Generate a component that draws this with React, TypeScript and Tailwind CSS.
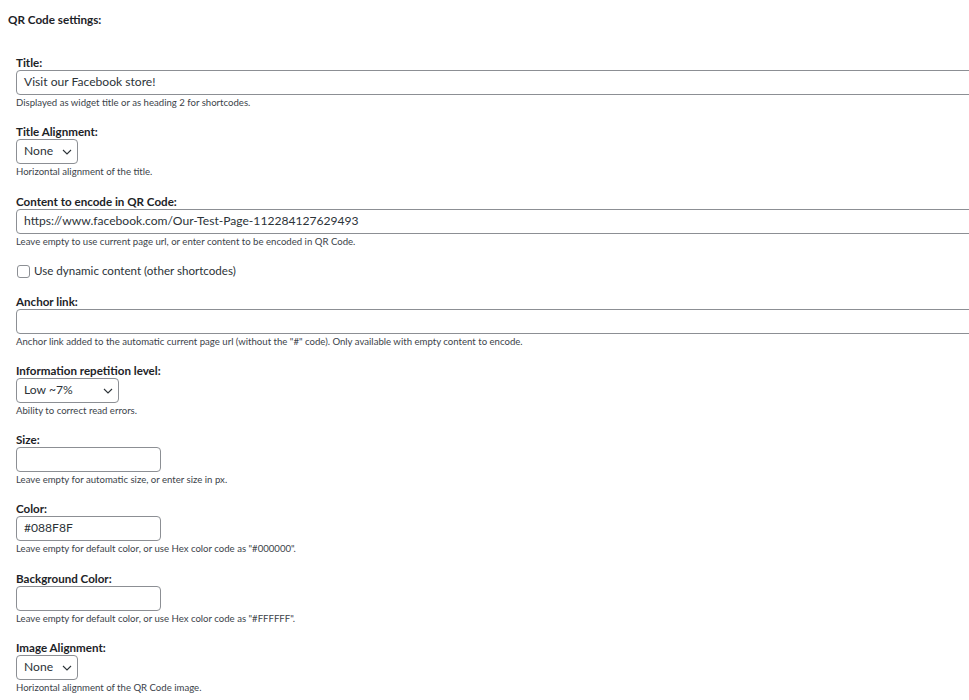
import React from "react";

const font = { fontFamily: 'Lato, "Open Sans", sans-serif' };

function Chevron() {
  return (
    <svg width="10" height="6" viewBox="0 0 10 6" className="shrink-0">
      <path d="M1 1l4 4 4-4" fill="none" stroke="#2c3338" strokeWidth="1.1" />
    </svg>
  );
}

function Label({ children }: { children: React.ReactNode }) {
  return (
    <div className="text-[11.6px] leading-[15px] font-bold text-[#1d2327]">{children}</div>
  );
}

function Help({ children }: { children: React.ReactNode }) {
  return <div className="text-[9.6px] leading-[16px] text-[#3c434a]">{children}</div>;
}

function TextInput({ value, w }: { value?: string; w: string }) {
  return (
    <div
      className={`${w} h-[25px] border border-[#8c8f94] rounded-[4px] bg-white flex items-center px-[7px] text-[12.1px] text-[#2c3338] whitespace-nowrap overflow-hidden`}
    >
      {value}
    </div>
  );
}

function Select({ value, w }: { value: string; w: string }) {
  return (
    <div
      className={`${w} h-[25px] border border-[#8c8f94] rounded-[4px] bg-white flex items-center justify-between pl-[7px] pr-[5px] text-[12.1px] text-[#2c3338]`}
    >
      <span>{value}</span>
      <Chevron />
    </div>
  );
}

function Section({ label, children, help }: { label: string; children: React.ReactNode; help: string }) {
  return (
    <div className="mb-[13px]">
      <Label>{label}</Label>
      {children}
      <Help>{help}</Help>
    </div>
  );
}

export default function App() {
  return (
    <div className="w-[969px] h-[700px] overflow-hidden bg-white" style={font}>
      <div className="pl-[8px] pt-[11px] text-[11.7px] leading-[16px] font-bold text-[#1d2327]">
        QR Code settings:
      </div>
      <div className="pl-[16px] pt-[28px]">
        <Section label="Title:" help="Displayed as widget title or as heading 2 for shortcodes.">
          <TextInput w="w-[970px]" value="Visit our Facebook store!" />
        </Section>
        <Section label="Title Alignment:" help="Horizontal alignment of the title.">
          <Select w="w-[62px]" value="None" />
        </Section>
        <div className="h-px" />
        <Section
          label="Content to encode in QR Code:"
          help="Leave empty to use current page url, or enter content to be encoded in QR Code."
        >
          <TextInput w="w-[970px]" value="https://www.facebook.com/Our-Test-Page-112284127629493" />
        </Section>
        <div className="flex items-center h-[16px] mb-[15px] gap-[4px] text-[11.6px] text-[#2c3338]">
          <div className="w-[13px] h-[13px] border border-[#8c8f94] rounded-[3px] bg-white ml-[1px]" />
          <span>Use dynamic content (other shortcodes)</span>
        </div>
        <Section
          label="Anchor link:"
          help={'Anchor link added to the automatic current page url (without the "#" code). Only available with empty content to encode.'}
        >
          <TextInput w="w-[970px]" />
        </Section>
        <Section label="Information repetition level:" help="Ability to correct read errors.">
          <Select w="w-[103px]" value="Low ~7%" />
        </Section>
        <Section label="Size:" help="Leave empty for automatic size, or enter size in px.">
          <TextInput w="w-[145px]" />
        </Section>
        <Section label="Color:" help={'Leave empty for default color, or use Hex color code as "#000000".'}>
          <TextInput w="w-[145px]" value="#088F8F" />
        </Section>
        <div className="h-px" />
        <Section
          label="Background Color:"
          help={'Leave empty for default color, or use Hex color code as "#FFFFFF".'}
        >
          <TextInput w="w-[145px]" />
        </Section>
        <Section label="Image Alignment:" help="Horizontal alignment of the QR Code image.">
          <Select w="w-[62px]" value="None" />
        </Section>
      </div>
    </div>
  );
}
